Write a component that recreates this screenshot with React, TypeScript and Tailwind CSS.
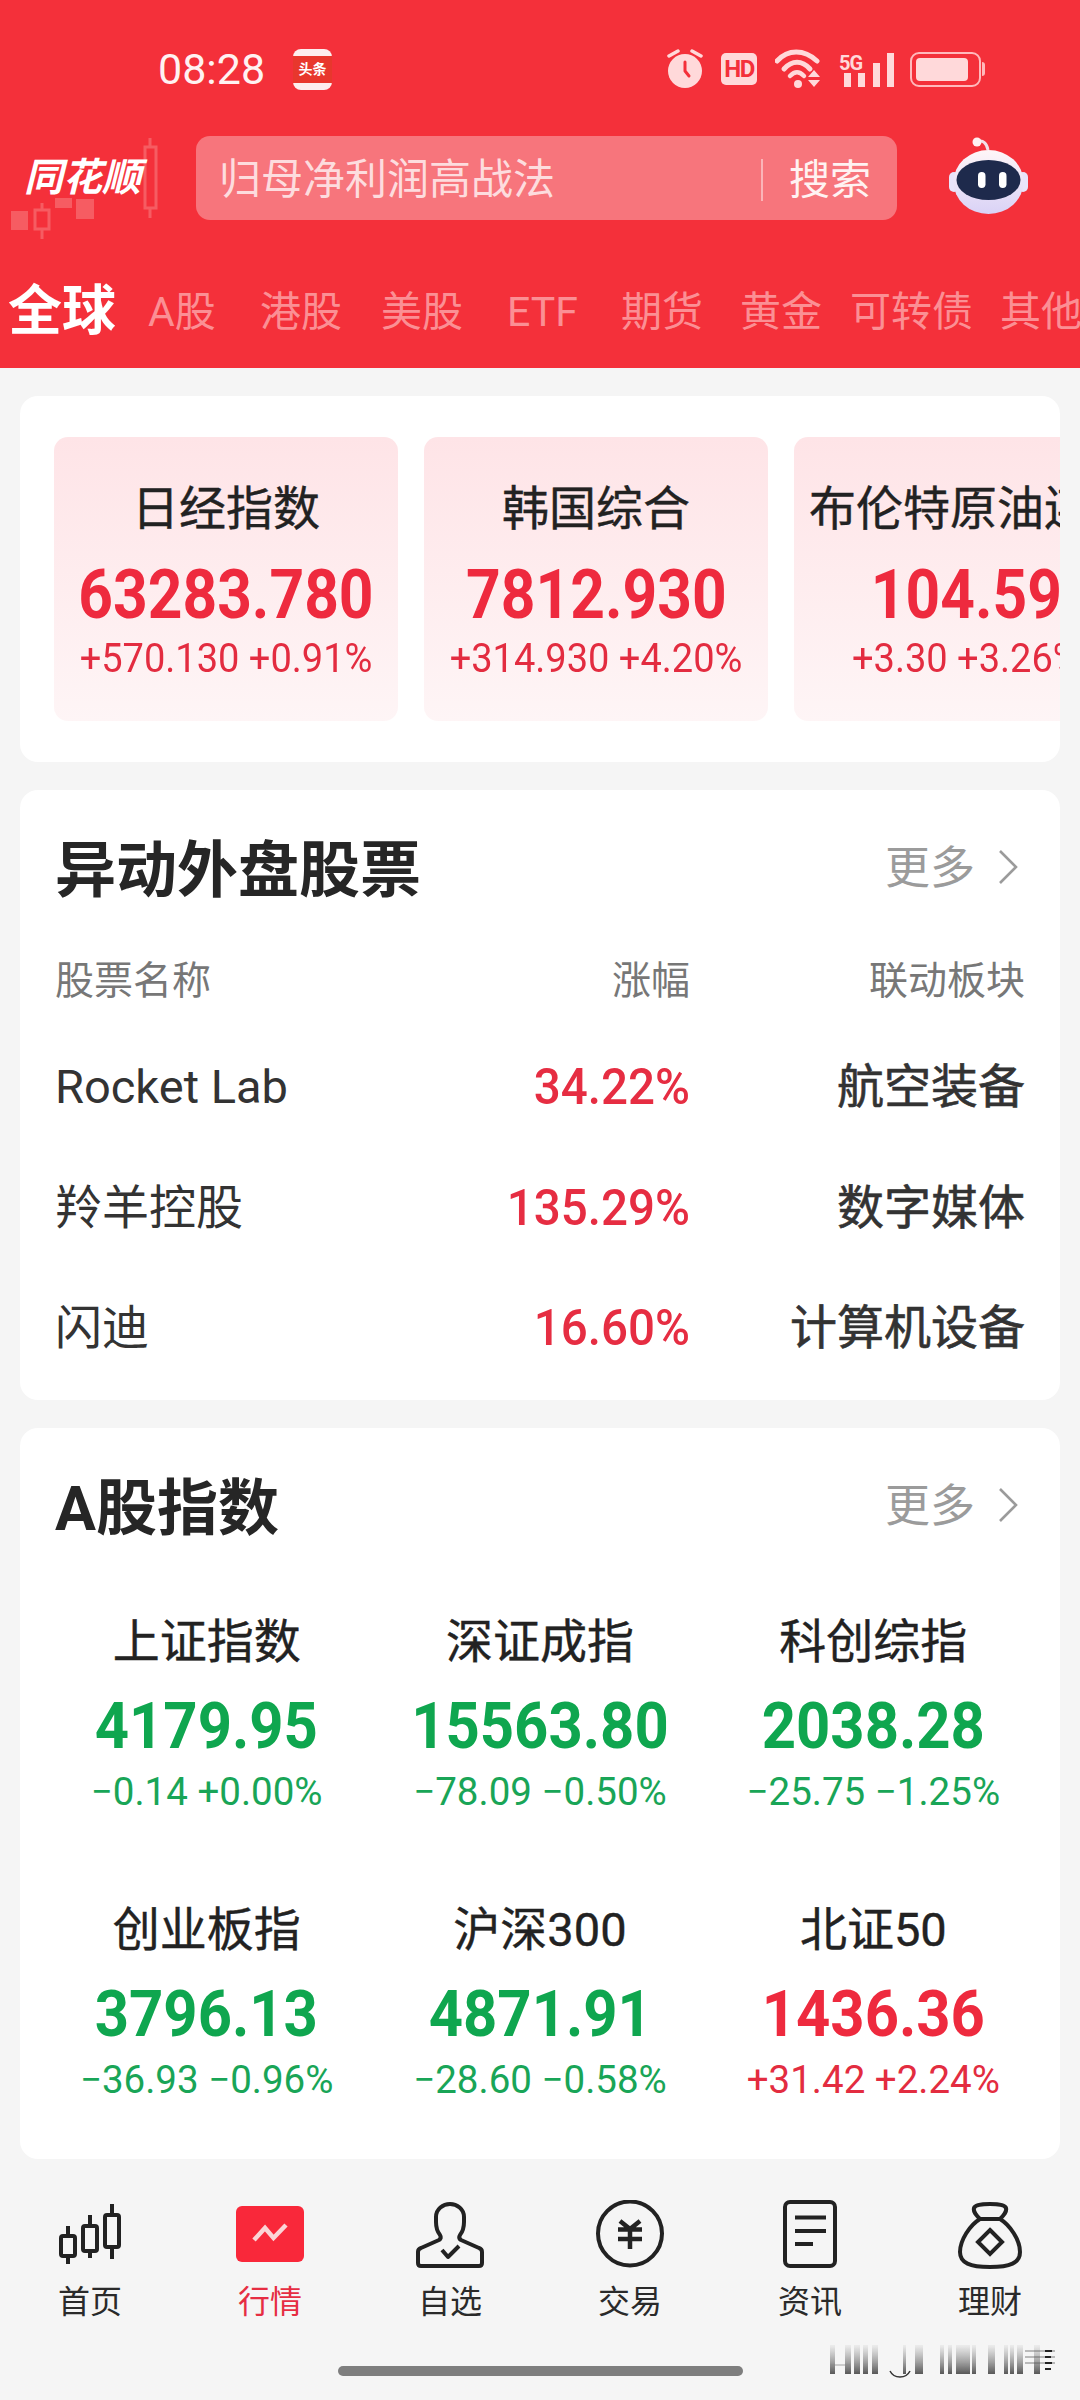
import React from "react";

const tabs = [
  { label: "A股", className: "ml-[30px] w-[68px]" },
  { label: "港股", className: "ml-[44px] w-[83px]" },
  { label: "美股", className: "ml-[38px] w-[82px]" },
  { label: "ETF", className: "ml-[44px] w-[70px]" },
  { label: "期货", className: "ml-[44px] w-[81px]" },
  { label: "黄金", className: "ml-[38px] w-[81px]" },
  { label: "可转债", className: "ml-[29px] w-[124px]" },
  { label: "其他", className: "ml-[26px] w-[84px]" },
];

const globalIndexes = [
  { name: "日经指数", value: "63283.780", change: "+570.130 +0.91%", nameClass: "" },
  { name: "韩国综合", value: "7812.930", change: "+314.930 +4.20%", nameClass: "" },
  { name: "布伦特原油连续", value: "104.59", change: "+3.30 +3.26%", nameClass: "pl-[15px]" },
];

const movers = [
  { name: "Rocket Lab", pct: "34.22%", sector: "航空装备" },
  { name: "羚羊控股", pct: "135.29%", sector: "数字媒体" },
  { name: "闪迪", pct: "16.60%", sector: "计算机设备" },
];

const aShares = [
  { name: "上证指数", value: "4179.95", change: "−0.14 +0.00%", up: false },
  { name: "深证成指", value: "15563.80", change: "−78.09 −0.50%", up: false },
  { name: "科创综指", value: "2038.28", change: "−25.75 −1.25%", up: false },
  { name: "创业板指", value: "3796.13", change: "−36.93 −0.96%", up: false },
  { name: "沪深300", value: "4871.91", change: "−28.60 −0.58%", up: false },
  { name: "北证50", value: "1436.36", change: "+31.42 +2.24%", up: true },
];

function AlarmIcon() {
  return (
    <svg width="36" height="40" viewBox="0 0 36 40" fill="none">
      <circle cx="18" cy="22" r="17" fill="#ffd9da" />
      <path d="M18 13v9l4 5" stroke="#f4303a" strokeWidth="3" strokeLinecap="round" strokeLinejoin="round" />
      <path d="M2 7l9-5M34 7l-9-5" stroke="#ffd9da" strokeWidth="3.5" strokeLinecap="round" />
    </svg>
  );
}

function WifiIcon() {
  return (
    <svg width="48" height="40" viewBox="0 0 48 40" fill="none">
      <path d="M2 12C13 0 29 0 42 12" stroke="#ffd9da" strokeWidth="5" strokeLinecap="round" />
      <path d="M9 20C17 11 27 11 35 20" stroke="#ffd9da" strokeWidth="5" strokeLinecap="round" />
      <path d="M15 27C20 22 24 22 29 27" stroke="#ffd9da" strokeWidth="4.5" strokeLinecap="round" />
      <circle cx="23" cy="35" r="4" fill="#ffd9da" />
      <path d="M39 21l6 7H33zM33 31h12l-6 7z" fill="#ffd9da" />
    </svg>
  );
}

function SignalIcon() {
  return (
    <div className="flex h-[36px] w-[50px] items-end justify-between">
      <div className="relative h-[14px] w-[7px] bg-[#ffd9da]">
        <span className="absolute bottom-[14px] left-[-5px] text-[20px] leading-[20px] font-bold tracking-[-1px] text-[#ffd9da]">
          5G
        </span>
      </div>
      <div className="h-[14px] w-[7px] bg-[#ffd9da]" />
      <div className="h-[24px] w-[7px] bg-[#ffd9da]" />
      <div className="h-[34px] w-[7px] bg-[#ffd9da]" />
    </div>
  );
}

function BatteryIcon() {
  return (
    <div className="flex items-center">
      <div className="h-[35px] w-[71px] rounded-[9px] border-2 border-[#ffb9bc] p-[4px]">
        <div className="h-full w-[52px] rounded-[4px] bg-[#ffd9da]" />
      </div>
      <div className="ml-[1px] h-[14px] w-[3px] rounded-r-[3px] bg-[#ffb9bc]" />
    </div>
  );
}

function Robot() {
  return (
    <svg width="84" height="78" viewBox="0 0 84 78" fill="none">
      <defs>
        <linearGradient id="robotShell" x1="0" y1="0" x2="0" y2="1">
          <stop offset="0" stopColor="#fff6f8" />
          <stop offset="1" stopColor="#d9d2f6" />
        </linearGradient>
      </defs>
      <path d="M30 6C36 3 40 8 41 14" stroke="#f3dfe6" strokeWidth="3" />
      <circle cx="30" cy="6" r="4.5" fill="#fff0f2" />
      <rect x="2" y="36" width="10" height="20" rx="5" fill="#e9e4fa" />
      <rect x="71" y="36" width="10" height="20" rx="5" fill="#e9e4fa" />
      <ellipse cx="41.500" cy="46" rx="35" ry="32" fill="url(#robotShell)" />
      <ellipse cx="41.500" cy="44" rx="32" ry="20" fill="#1e2a4c" />
      <rect x="31" y="36" width="7.500" height="16" rx="3.700" fill="#fff" />
      <rect x="52" y="36" width="7.500" height="16" rx="3.700" fill="#fff" />
    </svg>
  );
}

function LogoCandles() {
  return (
    <svg className="absolute inset-0" width="196" height="110" viewBox="0 130 196 110" fill="none">
      <path d="M150 132v10M150 202v10" stroke="#f65c62" strokeWidth="3" />
      <rect x="145" y="141" width="11" height="61" stroke="#f65c62" strokeWidth="3" />
      <rect x="11" y="205" width="17" height="19" fill="#f65c62" />
      <rect x="35" y="204" width="14" height="19" stroke="#f65c62" strokeWidth="3" />
      <path d="M42 197v7M42 223v10" stroke="#f65c62" strokeWidth="3" />
      <rect x="55" y="192" width="17" height="10" fill="#f65c62" />
      <rect x="76" y="193" width="18" height="20" fill="#f65c62" />
    </svg>
  );
}

function MoreLink() {
  return (
    <div className="flex items-center">
      <span className="text-[45px] leading-[60px] text-[#9b9b9b]">更多</span>
      <svg className="mb-[4px] ml-[21px]" width="24" height="36" viewBox="0 0 24 36" fill="none">
        <path d="M4 2l16 16L4 34" stroke="#9b9b9b" strokeWidth="2.600" />
      </svg>
    </div>
  );
}

function SectionHead({ title }: { title: string }) {
  return (
    <div className="flex h-[60px] items-center justify-between pr-[40px] pl-[35px]">
      <h2 className="pt-[3px] text-[61px] leading-[60px] font-bold text-[#262626]">{title}</h2>
      <MoreLink />
    </div>
  );
}

function CandleTabIcon() {
  return (
    <svg width="80" height="70" viewBox="0 0 80 70" fill="none" stroke="#222" strokeWidth="4">
      <rect x="11" y="36" width="14" height="20" rx="2" />
      <path d="M18 26v10M18 56v8" />
      <rect x="33" y="26" width="14" height="25" rx="2" />
      <path d="M40 15v11M40 51v7" />
      <rect x="55" y="15" width="14" height="32" rx="2" />
      <path d="M62 4v11M62 47v12" />
    </svg>
  );
}

function MarketTabIcon() {
  return (
    <svg width="80" height="70" viewBox="0 0 80 70" fill="none">
      <rect x="6" y="6" width="68" height="56" rx="6" fill="#f9283a" />
      <path d="M24 40l11-12 8.500 10L56 25" stroke="#fbd4d6" strokeWidth="4.500" />
    </svg>
  );
}

function WatchTabIcon() {
  return (
    <svg width="80" height="70" viewBox="0 0 80 70" fill="none" stroke="#222" strokeWidth="4" strokeLinejoin="round">
      <path d="M8 63V52Q8 49 11 48L29 40Q32 38 30 35Q26 30 26 22V17C26 9 33 4 40 4C47 4 54 9 54 17V22Q54 30 50 35Q48 38 51 40L69 48Q72 49 72 52V63Q72 66 69 66H11Q8 66 8 63Z" />
      <path d="M32 50l6 7 11-11" />
    </svg>
  );
}

function TradeTabIcon() {
  return (
    <svg width="80" height="70" viewBox="0 0 80 70" fill="none" stroke="#222" strokeWidth="4">
      <circle cx="40" cy="33.500" r="32" />
      <path d="M30 21l10 8 10-8M28 29.500h24M28 39h24M40 29.500V49" strokeWidth="4.500" />
    </svg>
  );
}

function NewsTabIcon() {
  return (
    <svg width="80" height="70" viewBox="0 0 80 70" fill="none" stroke="#222" strokeWidth="4">
      <rect x="15" y="2" width="50" height="64" rx="5" />
      <path d="M25 17.500h31M25 31h31M25 44h18" />
    </svg>
  );
}

function WealthTabIcon() {
  return (
    <svg width="80" height="70" viewBox="0 0 80 70" fill="none" stroke="#222" strokeWidth="4">
      <path d="M30 19C26 15 23 12 24 8C25 5 32 4 40 4C48 4 55 5 56 8C57 12 54 15 50 19C60 25 70 40 70 52C70 63 60 67 40 67C20 67 10 63 10 52C10 40 20 25 30 19Z" />
      <path d="M30 19H50" />
      <path d="M40 30l12 12-12 12-12-12z" />
    </svg>
  );
}

const navItems = [
  { label: "首页", icon: <CandleTabIcon />, active: false },
  { label: "行情", icon: <MarketTabIcon />, active: true },
  { label: "自选", icon: <WatchTabIcon />, active: false },
  { label: "交易", icon: <TradeTabIcon />, active: false },
  { label: "资讯", icon: <NewsTabIcon />, active: false },
  { label: "理财", icon: <WealthTabIcon />, active: false },
];

// x offsets and widths of the smeared strokes in the corner mark
const markBars = [
  [0, 5], [15, 6], [24, 6], [33, 5], [42, 6], [73, 3], [85, 8],
  [110, 4], [118, 4], [126, 14], [142, 4], [158, 7], [174, 4], [180, 4], [187, 6], [204, 6],
];

function CornerMark() {
  return (
    <svg className="absolute top-[2345px] left-[830px] blur-[0.7px]" width="225" height="36" viewBox="0 0 225 36" fill="none">
      <defs>
        <linearGradient id="markFade" x1="0" y1="0" x2="0" y2="1">
          <stop offset="0" stopColor="#666" stopOpacity="0.060" />
          <stop offset="1" stopColor="#222" stopOpacity="0.750" />
        </linearGradient>
      </defs>
      {markBars.map(([x, w]) => (
        <rect key={x} x={x} y="0" width={w} height="29" fill="url(#markFade)" />
      ))}
      <path d="M0 20H20" stroke="#888" strokeWidth="1.500" opacity="0.500" />
      <path d="M60 26C64 34 76 34 80 26" stroke="#333" strokeWidth="1.500" />
      <path d="M195 6H226M195 12H226M195 18H226" stroke="#555" strokeWidth="1.500" opacity="0.500" />
      <path d="M215 6h7M215 12h6M215 18h7M215 24h6" stroke="#222" strokeWidth="2" />
    </svg>
  );
}

export default function App() {
  return (
    <div className="relative flex h-[2400px] w-[1080px] flex-col overflow-hidden bg-[#f5f5f5] font-[Roboto,'Noto_Sans_CJK_SC',sans-serif]">
      {/* Red header: status bar, search and market tabs */}
      <header className="h-[368px] shrink-0 bg-[#f4303a]">
        <div className="flex h-[136px] items-center pt-[2px] pr-[95px] pl-[158px]">
          <span className="w-[107px] text-[43px] leading-[50px] whitespace-nowrap text-[#fff2f2]">08:28</span>
          <div className="ml-[28px] flex h-[41px] w-[39px] items-center justify-center rounded-[8px] bg-[#fdeeee]">
            <div className="flex h-[27px] w-full items-center justify-center bg-[#e8372d] text-[14px] leading-[27px] font-bold text-white">
              头条
            </div>
          </div>
          <div className="ml-auto flex items-center">
            <AlarmIcon />
            <div className="ml-[18px] flex h-[32px] w-[36px] items-center justify-center rounded-[5px] bg-[#ffd9da] text-[24px] font-bold tracking-[-1.500px] text-[#f4303a]">
              HD
            </div>
            <div className="ml-[18px]">
              <WifiIcon />
            </div>
            <div className="ml-[21px]">
              <SignalIcon />
            </div>
            <div className="ml-[16px]">
              <BatteryIcon />
            </div>
          </div>
        </div>

        <div className="flex h-[84px] items-center">
          <div className="relative h-[84px] w-[196px] shrink-0">
            <LogoCandles />
            <span className="absolute top-[18px] left-[24px] text-[39px] leading-[48px] font-bold whitespace-nowrap text-white italic">
              同花顺
            </span>
          </div>
          <div className="flex h-[84px] w-[701px] items-center rounded-[14px] bg-[#f7757c] pt-[3px] pl-[23px]">
            <span className="text-[42px] leading-[80px] text-[#fddcde]">归母净利润高战法</span>
            <div className="ml-auto h-[42px] w-[2px] bg-[#fbb4b8]" />
            <span className="mr-[26px] ml-[26px] text-[41px] leading-[80px] text-[#fff2f2]">搜索</span>
          </div>
          <div className="mb-[6px] ml-[50px]">
            <Robot />
          </div>
        </div>

        <nav className="mt-[60px] flex h-[62px] items-center overflow-hidden pt-[2px] pl-[8px]">
          <span className="w-[110px] shrink-0 text-[54px] leading-[60px] font-bold whitespace-nowrap text-white">全球</span>
          {tabs.map((tab) => (
            <span
              key={tab.label}
              className={`shrink-0 text-[41px] leading-[60px] whitespace-nowrap text-[#fb8f94] ${tab.className}`}
            >
              {tab.label}
            </span>
          ))}
        </nav>
      </header>

      <main className="mx-[20px] mt-[28px] flex flex-col gap-[28px]">
        {/* Global index cards, scrolled off at the right */}
        <section className="h-[366px] overflow-hidden rounded-[18px] bg-white pt-[41px] pl-[34px]">
          <div className="flex gap-[26px]">
            {globalIndexes.map((item) => (
              <div
                key={item.name}
                className="flex h-[284px] w-[344px] shrink-0 flex-col items-center rounded-[14px] bg-gradient-to-b from-[#fee4e7] to-[#fef5f6]"
              >
                <div className={`mt-[42px] text-[47px] leading-[60px] whitespace-nowrap text-[#222] [-webkit-text-stroke:0.4px_#222] ${item.nameClass}`}>
                  {item.name}
                </div>
                <div className="mt-[20px] scale-x-[0.89] text-[68px] leading-[72px] font-bold whitespace-nowrap text-[#ee2a3e]">
                  {item.value}
                </div>
                <div className="mt-[4px] scale-x-[0.95] text-[40px] leading-[48px] whitespace-nowrap text-[#e32c40]">
                  {item.change}
                </div>
              </div>
            ))}
          </div>
        </section>

        {/* Overseas movers table */}
        <section className="h-[610px] rounded-[18px] bg-white pt-[49px]">
          <SectionHead title="异动外盘股票" />
          <div className="mt-[52px] grid grid-cols-[1fr_200px_335px] pr-[35px] pl-[35px] text-[39px] leading-[60px] text-[#777]">
            <span>股票名称</span>
            <span className="text-right">涨幅</span>
            <span className="text-right">联动板块</span>
          </div>
          <div className="mt-[16px] flex flex-col">
            {movers.map((row) => (
              <div
                key={row.name}
                className="grid h-[120.500px] grid-cols-[1fr_200px_335px] items-center pr-[35px] pl-[35px] text-[47px] text-[#333]"
              >
                <span className="leading-[60px]">{row.name}</span>
                <span className="origin-right scale-x-[0.95] text-right text-[50px] leading-[60px] font-medium text-[#e62d42]">
                  {row.pct}
                </span>
                <span className="text-right leading-[60px] [-webkit-text-stroke:0.6px_#333]">{row.sector}</span>
              </div>
            ))}
          </div>
        </section>

        {/* A-share indexes */}
        <section className="h-[731px] rounded-[18px] bg-white pt-[49px]">
          <SectionHead title="A股指数" />
          <div className="mt-[75px] grid grid-cols-3 gap-y-[85px] px-[20px]">
            {aShares.map((item) => (
              <div key={item.name} className="flex flex-col items-center">
                <div className="text-[47px] leading-[60px] text-[#222] [-webkit-text-stroke:0.4px_#222]">{item.name}</div>
                <div
                  className={`mt-[19px] scale-x-[0.92] text-[65px] leading-[70px] font-bold ${item.up ? "text-[#ee2a3e]" : "text-[#0fa64f]"}`}
                >
                  {item.value}
                </div>
                <div className={`mt-[8px] text-[38.500px] leading-[46px] ${item.up ? "text-[#e32c40]" : "text-[#19a557]"}`}>
                  {item.change}
                </div>
              </div>
            ))}
          </div>
        </section>
      </main>

      {/* Bottom tab bar and gesture pill */}
      <nav className="mt-[41px] grid grid-cols-6">
        {navItems.map((item) => (
          <div key={item.label} className="flex flex-col items-center">
            {item.icon}
            <span className={`mt-[10px] text-[32px] leading-[44px] ${item.active ? "text-[#e62d42]" : "text-[#2a2a2a]"}`}>
              {item.label}
            </span>
          </div>
        ))}
      </nav>
      <div className="mx-auto mt-[42px] h-[10px] w-[405px] rounded-full bg-[#7e7e7e]" />

      <CornerMark />
    </div>
  );
}
